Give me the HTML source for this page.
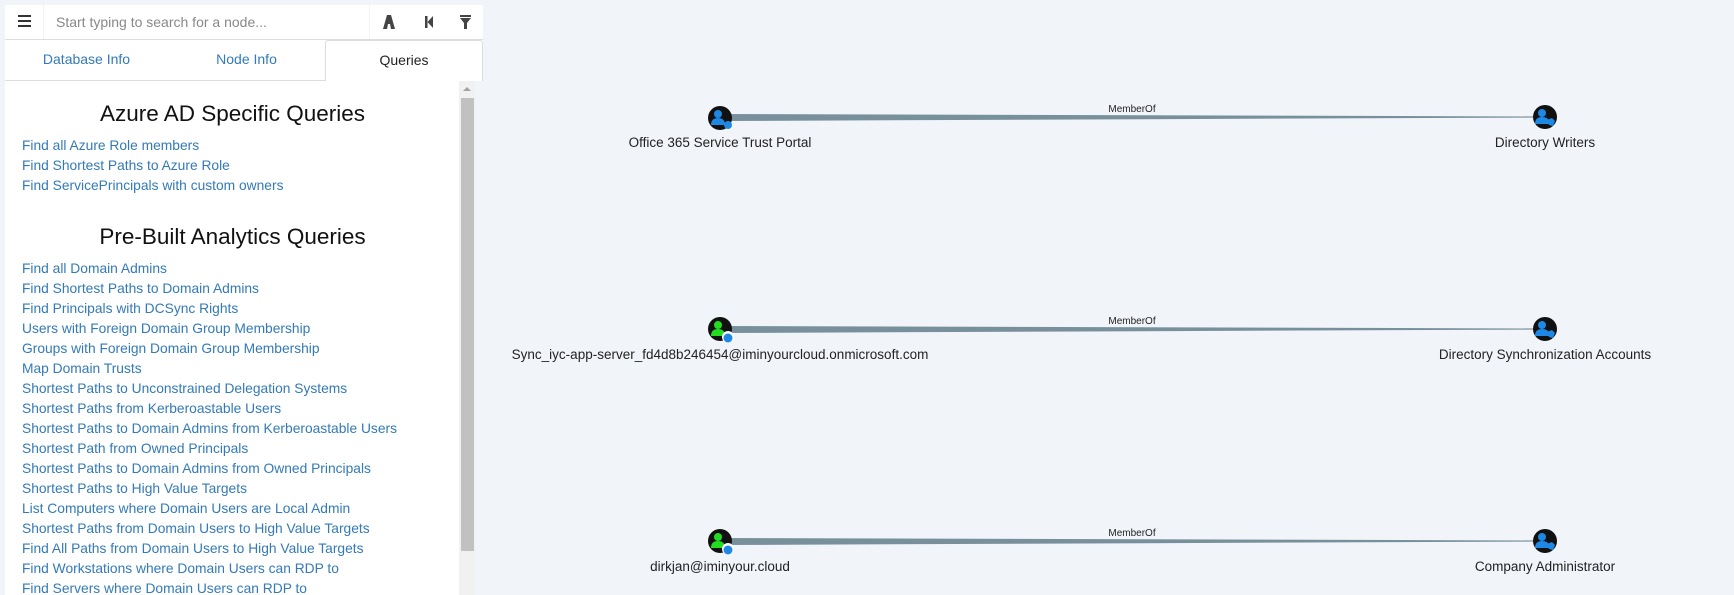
<!DOCTYPE html>
<html><head><meta charset="utf-8"><style>
*{margin:0;padding:0;box-sizing:border-box}
body{width:1734px;height:595px;overflow:hidden;background:#f1f4f9;font-family:"Liberation Sans",Arial,sans-serif;position:relative}
.top{position:absolute;left:5px;top:5px;width:478px;height:35px;background:#fff;border-bottom:1px solid #ddd}
.tabs{position:absolute;left:5px;top:40px;width:478px;height:41px;background:#fff;border-bottom:1px solid #ddd}
.tab{position:absolute;top:0;height:41px;line-height:38px;font-size:14px;color:#337ab7;text-align:center}
.panel{position:absolute;left:5px;top:81px;width:470px;height:514px;background:#fff;overflow:hidden}
h2{font-weight:normal;font-size:22.5px;color:#111;text-align:center;width:455px;position:absolute;left:0}
.l{position:absolute;left:17px;font-size:13.8px;color:#337ab7;white-space:nowrap}
.lbl{position:absolute;font-size:13.5px;color:#222;white-space:nowrap;transform:translateX(-50%)}
</style></head><body>
<div class="top">
 <div style="position:absolute;left:13px;top:10px;width:13px;height:2px;background:#333;box-shadow:0 5px 0 #333,0 10px 0 #333"></div>
 <div style="position:absolute;left:38px;top:0;width:327px;height:34px;background:#fff;border-left:1px solid #f3f3f3;border-right:1px solid #f3f3f3;font-size:14px;color:#888;line-height:34px;padding-left:12px">Start typing to search for a node...</div>
 <svg style="position:absolute;left:375px;top:9px" width="100" height="16">
  <path d="M3 15 L7 1 L11 1 L15 15 L11 15 L10 10 L8 10 L7 15Z" fill="#444"/>
  <rect x="45" y="2" width="2.5" height="12" fill="#444"/><path d="M53 2 L53 14 L47.5 8Z" fill="#444"/>
  <rect x="80" y="1" width="11" height="2" fill="#444"/><path d="M80 4 L91 4 L87 9 L87 15 L84 15 L84 9Z" fill="#444"/>
 </svg>
</div>
<div class="tabs">
 <div class="tab" style="left:0;width:163px">Database Info</div>
 <div class="tab" style="left:163px;width:157px">Node Info</div>
 <div class="tab" style="left:320px;width:158px;color:#222;border:1px solid #ddd;border-bottom:none;border-radius:3px 3px 0 0;background:#fff">Queries</div>
</div>
<div class="panel">
 <div style="position:absolute;left:454px;top:0;width:16px;height:514px;background:#f1f1f1"></div>
 <div style="position:absolute;left:456px;top:17px;width:13px;height:453px;background:#c1c1c1"></div>
 <div style="position:absolute;left:458px;top:6px;width:0;height:0;border-left:4px solid transparent;border-right:4px solid transparent;border-bottom:4px solid #a3a3a3"></div>
 <h2 style="top:20px">Azure AD Specific Queries</h2>
 <div class="l" style="top:57px">Find all Azure Role members</div>
 <div class="l" style="top:77px">Find Shortest Paths to Azure Role</div>
 <div class="l" style="top:97px">Find ServicePrincipals with custom owners</div>
 <h2 style="top:143px">Pre-Built Analytics Queries</h2>
 <div class="l" style="top:180px">Find all Domain Admins</div>
 <div class="l" style="top:200px">Find Shortest Paths to Domain Admins</div>
 <div class="l" style="top:220px">Find Principals with DCSync Rights</div>
 <div class="l" style="top:240px">Users with Foreign Domain Group Membership</div>
 <div class="l" style="top:260px">Groups with Foreign Domain Group Membership</div>
 <div class="l" style="top:280px">Map Domain Trusts</div>
 <div class="l" style="top:300px">Shortest Paths to Unconstrained Delegation Systems</div>
 <div class="l" style="top:320px">Shortest Paths from Kerberoastable Users</div>
 <div class="l" style="top:340px">Shortest Paths to Domain Admins from Kerberoastable Users</div>
 <div class="l" style="top:360px">Shortest Path from Owned Principals</div>
 <div class="l" style="top:380px">Shortest Paths to Domain Admins from Owned Principals</div>
 <div class="l" style="top:400px">Shortest Paths to High Value Targets</div>
 <div class="l" style="top:420px">List Computers where Domain Users are Local Admin</div>
 <div class="l" style="top:440px">Shortest Paths from Domain Users to High Value Targets</div>
 <div class="l" style="top:460px">Find All Paths from Domain Users to High Value Targets</div>
 <div class="l" style="top:480px">Find Workstations where Domain Users can RDP to</div>
 <div class="l" style="top:500px">Find Servers where Domain Users can RDP to</div>
</div>
<svg style="position:absolute;left:0;top:0" width="1734" height="595">
 <defs>
  <g id="usr"><circle r="12" fill="#111"/><circle cx="-2" cy="-4" r="4" fill="#1e88e5"/><path d="M-9 7 Q-9 0 -2 0 Q5 0 5 7Z" fill="#1e88e5"/></g>
  <g id="grp"><circle r="12" fill="#111"/><circle cx="-3" cy="-4" r="4" fill="#1e88e5"/><path d="M-10 7 Q-10 0 -3 0 Q3 0 4 4 L4 7Z" fill="#1e88e5"/><path d="M2 3 L7 1 L10 4 L8 9 L4 8Z" fill="#1e88e5"/></g>
  <g id="grn"><circle r="12" fill="#111"/><circle cx="-2" cy="-4" r="4" fill="#22dd22"/><path d="M-9 7 Q-9 0 -2 0 Q5 0 5 7Z" fill="#22dd22"/><circle cx="8" cy="8" r="6" fill="#fff"/><circle cx="8" cy="9" r="4.5" fill="#1e88e5"/></g>
 </defs>
 <polygon points="720,114 1545,116.5 1545,117.5 720,121" fill="#78909c"/>
 <polygon points="720,326 1545,328.5 1545,329.5 720,333" fill="#78909c"/>
 <polygon points="720,538 1545,540.5 1545,541.5 720,545" fill="#78909c"/>
 <text x="1132" y="112" font-size="10" fill="#222" text-anchor="middle" font-family="Liberation Sans">MemberOf</text>
 <text x="1132" y="324" font-size="10" fill="#222" text-anchor="middle" font-family="Liberation Sans">MemberOf</text>
 <text x="1132" y="536" font-size="10" fill="#222" text-anchor="middle" font-family="Liberation Sans">MemberOf</text>
 <g transform="translate(720,118)"><use href="#usr"/><circle cx="8" cy="7" r="4" fill="#1e88e5"/></g>
 <use href="#grp" x="1545" y="117"/>
 <use href="#grn" x="720" y="329"/>
 <use href="#grp" x="1545" y="329"/>
 <use href="#grn" x="720" y="541"/>
 <use href="#grp" x="1545" y="541"/>
</svg>
<div class="lbl" style="left:720px;top:135px">Office 365 Service Trust Portal</div>
<div class="lbl" style="left:1545px;top:135px">Directory Writers</div>
<div class="lbl" style="left:720px;top:347px">Sync_iyc-app-server_fd4d8b246454@iminyourcloud.onmicrosoft.com</div>
<div class="lbl" style="left:1545px;top:347px">Directory Synchronization Accounts</div>
<div class="lbl" style="left:720px;top:559px">dirkjan@iminyour.cloud</div>
<div class="lbl" style="left:1545px;top:559px">Company Administrator</div>
</body></html>
